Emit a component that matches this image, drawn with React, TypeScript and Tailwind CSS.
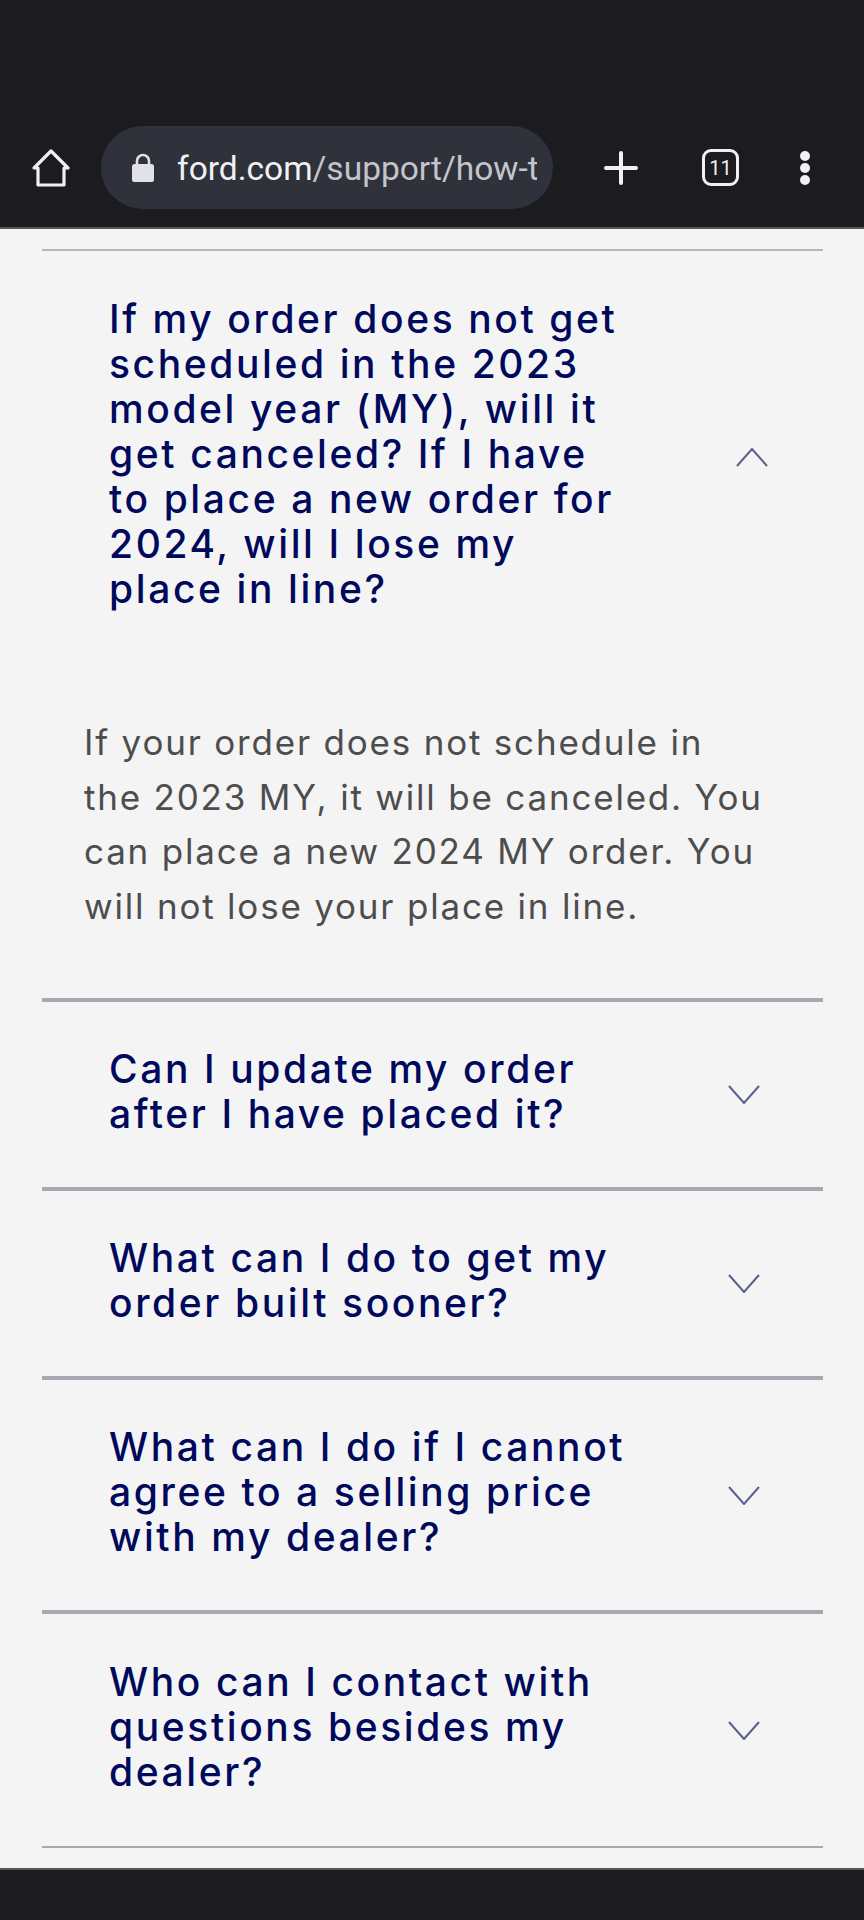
const questions = [
  { lines: ['Can I update my order', 'after I have placed it?'], rowClass: 'h-[189px]', border: 'border-b-[4px]' },
  { lines: ['What can I do to get my', 'order built sooner?'], rowClass: 'h-[189px]', border: 'border-b-[4px]' },
  { lines: ['What can I do if I cannot', 'agree to a selling price', 'with my dealer?'], rowClass: 'h-[234px]', border: 'border-b-[4px]' },
  { lines: ['Who can I contact with', 'questions besides my', 'dealer?'], rowClass: 'h-[234px]', border: 'border-b-2' },
]

const openLines = [
  'If my order does not get',
  'scheduled in the 2023',
  'model year (MY), will it',
  'get canceled? If I have',
  'to place a new order for',
  '2024, will I lose my',
  'place in line?',
]

const answerLines = [
  'If your order does not schedule in',
  'the 2023 MY, it will be canceled. You',
  'can place a new 2024 MY order. You',
  'will not lose your place in line.',
]

function Question({ lines }: { lines: string[] }) {
  return (
    <div className="mb-[8px] text-[39px] leading-[45px] font-medium tracking-[2.6px] text-[#00095b]">
      {lines.map(l => <div key={l} className="whitespace-nowrap">{l}</div>)}
    </div>
  )
}

function Chevron({ up }: { up?: boolean }) {
  return (
    <svg width="32" height="19" viewBox="0 0 32 19" fill="none" stroke="#5a5f8e" strokeWidth="2">
      <path d={up ? 'M1 18 L16 1 L31 18' : 'M1 1 L16 18 L31 1'} />
    </svg>
  )
}

export default function App() {
  return (
    <div className="w-[864px] h-[1920px] flex flex-col bg-[#f4f4f4] font-['Inter',sans-serif]">
      <div className="h-[229px] bg-[#1c1b20] border-b-2 border-[#55555a] flex items-end pb-[18px] pl-[32px]">
        <div className="h-[83px] flex items-center">
          <svg width="38" height="38" viewBox="0 0 38 38" fill="none" stroke="#f1f1f4" strokeWidth="3.2" strokeLinejoin="round">
            <path d="M2 19 L19 2 L36 19 H32 V36 H6 V19 Z" />
          </svg>
          <div className="ml-[31px] w-[452px] h-[83px] rounded-[42px] bg-[#2f323b] flex items-center pl-[30px]">
            <svg width="24" height="30" viewBox="0 0 24 30" className="shrink-0">
              <path d="M6 12 V8 a6 6 0 0 1 12 0 v4" fill="none" stroke="#e2e2e6" strokeWidth="2.6" />
              <rect x="1" y="11" width="22" height="18" rx="2.5" fill="#e2e2e6" />
            </svg>
            <div className="ml-[22px] w-[360px] pt-[3px] overflow-hidden whitespace-nowrap text-[33.5px] font-['Roboto',sans-serif] text-[#c4c5cc]">
              <span className="text-[#f1f1f4]">ford.com</span>/support/how-to-order
            </div>
          </div>
          <svg width="34" height="34" viewBox="0 0 34 34" stroke="#f1f1f4" strokeWidth="4" strokeLinecap="round" className="ml-[51px]">
            <path d="M17 2 V32 M2 17 H32" />
          </svg>
          <div className="ml-[64px] w-[37px] h-[37px] rounded-[9px] border-[3.5px] border-[#f1f1f4] flex items-center justify-center text-[20px] font-['Roboto',sans-serif] text-[#f1f1f4]">
            11
          </div>
          <div className="flex flex-col gap-[2px] ml-[61px]">
            <div className="w-[10px] h-[10px] rounded-full bg-[#f1f1f4]" />
            <div className="w-[10px] h-[10px] rounded-full bg-[#f1f1f4]" />
            <div className="w-[10px] h-[10px] rounded-full bg-[#f1f1f4]" />
          </div>
        </div>
      </div>

      <div className="flex-1 pl-[42px] pr-[41px] pt-[20px]">
        <div className="border-t-2 border-[#b5b5bd]">
          <div className="flex items-center justify-between pl-[67px] pr-[55px] pt-[45px]">
            <Question lines={openLines} />
            <Chevron up />
          </div>
          <div className="pl-[42px] pt-[96px] pb-[65px] text-[35px] leading-[54.5px] tracking-[1.8px] text-[#4d4d4d]">
            {answerLines.map(l => <div key={l} className="whitespace-nowrap">{l}</div>)}
          </div>
        </div>
        <div className="border-t-[4px] border-[#a8a8b0]">
          {questions.map(q => (
            <div key={q.lines[0]} className={`${q.rowClass} ${q.border} border-[#a8a8b0] flex items-center justify-between pl-[67px] pr-[63px]`}>
              <Question lines={q.lines} />
              <Chevron />
            </div>
          ))}
        </div>
      </div>

      <div className="h-[52px] bg-[#1c1b20] border-t-2 border-[#55555a]" />
    </div>
  )
}
